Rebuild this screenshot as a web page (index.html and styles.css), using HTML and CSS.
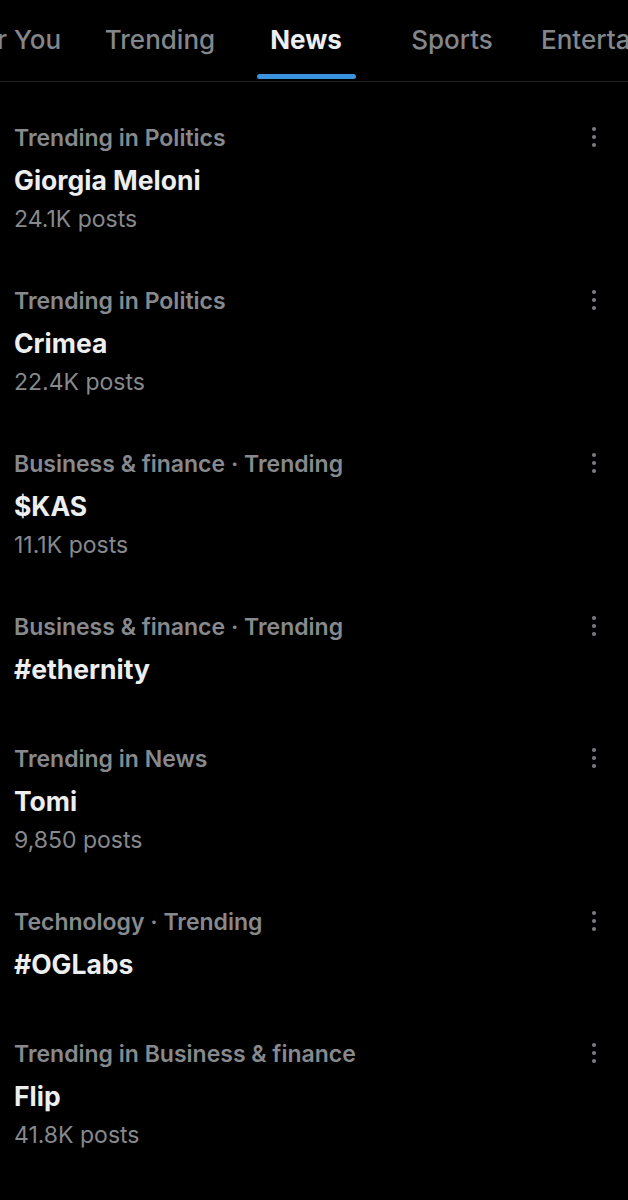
FILE: index.html
```html
<!DOCTYPE html>
<html lang="en">
<head>
<meta charset="utf-8">
<link rel="stylesheet" href="styles.css">
</head>
<body>
<header class="tabs">
  <nav class="tab-strip">
    <div class="tab">For You</div>
    <div class="tab">Trending</div>
    <div class="tab active"><span class="tab-label">News</span></div>
    <div class="tab">Sports</div>
    <div class="tab">Entertainment</div>
  </nav>
</header>
<main class="list">
  <div class="item">
    <div class="meta">Trending in Politics</div>
    <div class="title">Giorgia Meloni</div>
    <div class="posts">24.1K posts</div>
    <span class="more"><i></i><i></i><i></i></span>
  </div>
  <div class="item">
    <div class="meta">Trending in Politics</div>
    <div class="title">Crimea</div>
    <div class="posts">22.4K posts</div>
    <span class="more"><i></i><i></i><i></i></span>
  </div>
  <div class="item">
    <div class="meta">Business &amp; finance · Trending</div>
    <div class="title">$KAS</div>
    <div class="posts">11.1K posts</div>
    <span class="more"><i></i><i></i><i></i></span>
  </div>
  <div class="item no-posts">
    <div class="meta">Business &amp; finance · Trending</div>
    <div class="title">#ethernity</div>
    <span class="more"><i></i><i></i><i></i></span>
  </div>
  <div class="item">
    <div class="meta">Trending in News</div>
    <div class="title">Tomi</div>
    <div class="posts">9,850 posts</div>
    <span class="more"><i></i><i></i><i></i></span>
  </div>
  <div class="item no-posts">
    <div class="meta">Technology · Trending</div>
    <div class="title">#OGLabs</div>
    <span class="more"><i></i><i></i><i></i></span>
  </div>
  <div class="item">
    <div class="meta">Trending in Business &amp; finance</div>
    <div class="title">Flip</div>
    <div class="posts">41.8K posts</div>
    <span class="more"><i></i><i></i><i></i></span>
  </div>
</main>
</body>
</html>
```

FILE: styles.css
```css
html, body {
  margin: 0;
  padding: 0;
  background: #000;
}
body {
  font-family: Inter, Roboto, "Liberation Sans", Arial, sans-serif;
  color: #e7e9ea;
  width: 628px;
  overflow: hidden;
}
.tabs {
  height: 81px;
  border-bottom: 1px solid #222528;
  overflow: hidden;
}
.tab-strip {
  display: flex;
  margin-left: -59px;
  height: 81px;
}
.tab {
  flex: 0 0 auto;
  min-width: 146px;
  box-sizing: border-box;
  padding: 0 16px 2px;
  display: flex;
  align-items: center;
  justify-content: center;
  font-size: 26px;
  font-weight: 500;
  color: #83878b;
  white-space: nowrap;
}
.tab.active {
  color: #eceeef;
  font-weight: 700;
}
.tab-label {
  position: relative;
  display: inline-block;
}
.tab-label::after {
  content: "";
  position: absolute;
  left: -13px;
  right: -14px;
  top: 50px;
  height: 5px;
  border-radius: 3px;
  background: #3b93de;
}
.list {
  padding-top: 14px;
}
.item {
  position: relative;
  padding: 21px 14px 22px;
}
.item.no-posts {
  padding-bottom: 27px;
}
.meta {
  font-size: 23px;
  line-height: 42px;
  font-weight: 600;
  color: #86898d;
}
.title {
  font-size: 26.5px;
  line-height: 42px;
  font-weight: 700;
  color: #eceeef;
}
.posts {
  font-size: 23px;
  line-height: 36px;
  color: #86898d;
}
.more {
  position: absolute;
  top: 31px;
  left: 592px;
  display: flex;
  flex-direction: column;
  gap: 4px;
}
.more i {
  display: block;
  width: 4px;
  height: 4px;
  border-radius: 50%;
  background: #7a7e82;
}
```
